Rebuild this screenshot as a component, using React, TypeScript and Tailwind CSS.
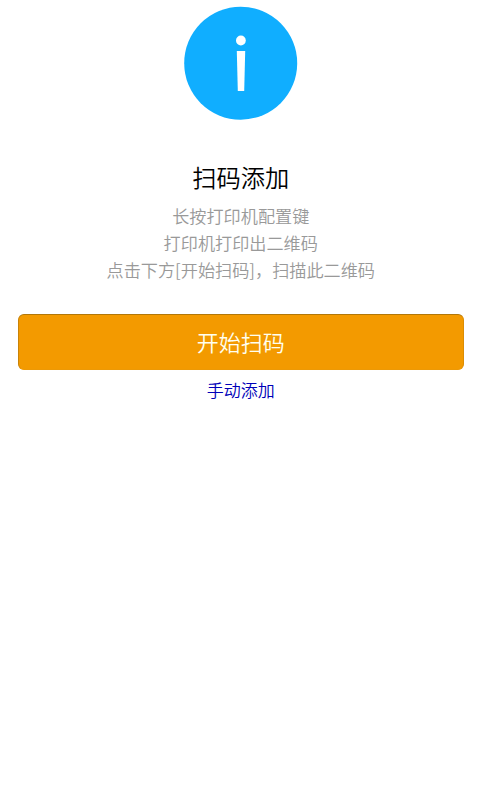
const steps = [
  "长按打印机配置键",
  "打印机打印出二维码",
  "点击下方[开始扫码]，扫描此二维码",
];

const InfoIcon = () => (
  <svg className="block h-[114px] w-[114px]" viewBox="0 0 114 114" aria-hidden="true">
    <circle cx="56.7" cy="57.2" r="56.5" fill="#10aeff" />
    <circle cx="56.9" cy="34.5" r="4.9" fill="#fff" />
    <path d="M52.8 45h8.4l-1 40h-6.4z" fill="#fff" />
  </svg>
);

export default function App() {
  return (
    <div className="flex min-h-screen flex-col items-center bg-white pt-1.5 pr-[16.5px] pl-[18px] text-center font-['Noto_Sans_CJK_SC',sans-serif] font-[350]">
      <InfoIcon />

      {/* Title and steps */}
      <h2 className="mt-[37px] text-[24.3px] leading-10 font-[350] text-black">扫码添加</h2>
      <div className="mt-[5px] text-[17.15px] leading-[27px] text-[#999]">
        {steps.map((step) => (
          <p key={step}>{step}</p>
        ))}
      </div>

      {/* Actions */}
      <button
        type="button"
        className="mt-[31px] h-14 w-full rounded-md border border-t-[#b27708] border-r-[#dc8d04] border-b-[#ed9906] border-l-[#c98308] bg-[#f39a00] pb-0.5 text-[22px] text-[#fffff0]"
      >
        开始扫码
      </button>
      <a href="#" className="mt-1.5 text-[17px] leading-[27px] text-[#0000b8]">
        手动添加
      </a>
    </div>
  );
}
